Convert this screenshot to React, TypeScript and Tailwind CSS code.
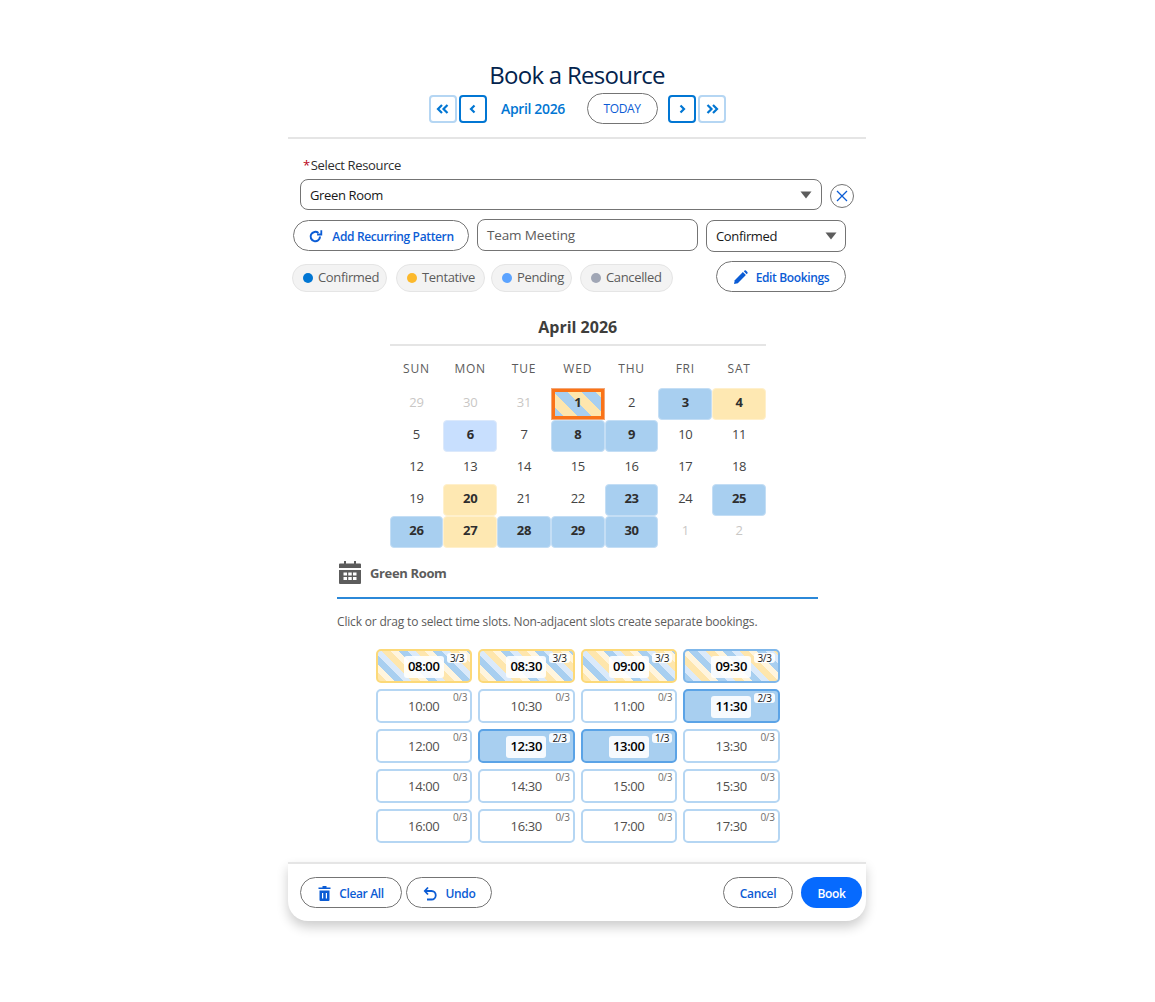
import React from "react";

const F = "[font-family:'Open_Sans','Noto_Sans',sans-serif] tracking-[-0.022em]";
const STRIPE_Y = "bg-[repeating-linear-gradient(45deg,#fee6ad_0,#fee6ad_6px,#fff5de_6px,#fff5de_12px,#a8cff0_12px,#a8cff0_18px,#dbeafa_18px,#dbeafa_24px)]";
const STRIPE_B = "bg-[repeating-linear-gradient(45deg,#a8cff0_0,#a8cff0_6px,#dbeafa_6px,#dbeafa_12px,#fee6ad_12px,#fee6ad_18px,#fff5de_18px,#fff5de_24px)]";

function NavBtn({ strong, children }: { strong?: boolean; children: React.ReactNode }) {
  return (
    <button className={`w-[28px] h-[28px] rounded-[4px] bg-white flex items-center justify-center text-[#0176d3] ${strong ? "border-2 border-[#0176d3]" : "border-2 border-[#b5d6f3]"}`}>
      {children}
    </button>
  );
}

function Chev({ dir, double }: { dir: "l" | "r"; double?: boolean }) {
  const t = dir === "r" ? "" : "scale(-1,1) translate(-14,0)";
  return (
    <svg width="14" height="14" viewBox="0 0 14 14" fill="none" stroke="#0176d3" strokeWidth="2.2">
      <g transform={t}>
        {double ? (
          <>
            <path d="M2.500 3 6.500 7 2.500 11" />
            <path d="M8 3 12 7 8 11" />
          </>
        ) : (
          <path d="M5.500 3.500 9 7 5.500 10.500" />
        )}
      </g>
    </svg>
  );
}

function Caret() {
  return (
    <svg width="12" height="8" viewBox="0 0 12 8"><path d="M0.500 0.500h11L6 7.500z" fill="#5c5c5c" /></svg>
  );
}

function Chip({ color, label, className }: { color: string; label: string; className: string }) {
  return (
    <div className={`h-[28px] shrink-0 rounded-[14px] bg-[#f3f3f3] border border-[#e5e5e5] flex items-center pl-[10px] gap-[5px] text-[13px] text-[#5c5c5c] ${className}`}>
      <span className="w-[10px] h-[10px] rounded-full" style={{ background: color }} />
      <span>{label}</span>
    </div>
  );
}

type Cell = { d: number; k?: "muted" | "blue" | "yellow" | "light" | "today" };
const cells: Cell[] = [
  { d: 29, k: "muted" }, { d: 30, k: "muted" }, { d: 31, k: "muted" }, { d: 1, k: "today" }, { d: 2 }, { d: 3, k: "blue" }, { d: 4, k: "yellow" },
  { d: 5 }, { d: 6, k: "light" }, { d: 7 }, { d: 8, k: "blue" }, { d: 9, k: "blue" }, { d: 10 }, { d: 11 },
  { d: 12 }, { d: 13 }, { d: 14 }, { d: 15 }, { d: 16 }, { d: 17 }, { d: 18 },
  { d: 19 }, { d: 20, k: "yellow" }, { d: 21 }, { d: 22 }, { d: 23, k: "blue" }, { d: 24 }, { d: 25, k: "blue" },
  { d: 26, k: "blue" }, { d: 27, k: "yellow" }, { d: 28, k: "blue" }, { d: 29, k: "blue" }, { d: 30, k: "blue" }, { d: 1, k: "muted" }, { d: 2, k: "muted" },
];

function DayCell({ c }: { c: Cell }) {
  if (c.k === "today") {
    return (
      <div className="h-[32px] pb-[2px] flex items-center justify-center text-[13px] font-bold text-[#2e2e2e] border border-[#f3a878] shadow-[inset_0_0_0_3px_#fa7318] bg-[repeating-linear-gradient(45deg,#a8cff0_0,#a8cff0_10px,#fee6ad_10px,#fee6ad_20px)]">
        {c.d}
      </div>
    );
  }
  const cls =
    c.k === "blue" ? "bg-[#a8cff0] border border-[#c4def5] rounded-[4px] font-bold text-[#2e2e2e]"
    : c.k === "yellow" ? "bg-[#fee8b2] border border-[#fff0cc] rounded-[4px] font-bold text-[#2e2e2e]"
    : c.k === "light" ? "bg-[#c8dffe] border border-[#dce9fb] rounded-[4px] font-bold text-[#2e2e2e]"
    : c.k === "muted" ? "text-[#c9c7c5]"
    : "text-[#444444]";
  return <div className={`h-[32px] pb-[2px] flex items-center justify-center text-[13px] ${cls}`}>{c.d}</div>;
}

type Slot = { t: string; n: number; kind: "free" | "busy" | "stripeY" | "stripeB" };
const slots: Slot[] = [
  { t: "08:00", n: 3, kind: "stripeY" }, { t: "08:30", n: 3, kind: "stripeY" }, { t: "09:00", n: 3, kind: "stripeY" }, { t: "09:30", n: 3, kind: "stripeB" },
  { t: "10:00", n: 0, kind: "free" }, { t: "10:30", n: 0, kind: "free" }, { t: "11:00", n: 0, kind: "free" }, { t: "11:30", n: 2, kind: "busy" },
  { t: "12:00", n: 0, kind: "free" }, { t: "12:30", n: 2, kind: "busy" }, { t: "13:00", n: 1, kind: "busy" }, { t: "13:30", n: 0, kind: "free" },
  { t: "14:00", n: 0, kind: "free" }, { t: "14:30", n: 0, kind: "free" }, { t: "15:00", n: 0, kind: "free" }, { t: "15:30", n: 0, kind: "free" },
  { t: "16:00", n: 0, kind: "free" }, { t: "16:30", n: 0, kind: "free" }, { t: "17:00", n: 0, kind: "free" }, { t: "17:30", n: 0, kind: "free" },
];

function SlotCell({ s }: { s: Slot }) {
  const free = s.kind === "free";
  const bg =
    s.kind === "free" ? "bg-white border-[#b5d6f3]"
    : s.kind === "busy" ? "bg-[#a8cff0] border-[#5ba3e6]"
    : s.kind === "stripeY" ? `border-[#fcd978] ${STRIPE_Y}`
    : `border-[#7fb7ea] ${STRIPE_B}`;
  return (
    <div className={`relative h-[34px] pt-px rounded-[5px] border-2 flex items-center justify-center ${bg}`}>
      {free ? (
        <span className="text-[13px] text-[#514f4d]">{s.t}</span>
      ) : (
        <span className="bg-white/90 rounded-[3px] px-[4px] h-[22px] flex items-center text-[13px] font-semibold text-black">{s.t}</span>
      )}
      {free ? (
        <span className="absolute top-0 right-[3px] text-[10px] leading-[13px] text-[#706e6b]">0/3</span>
      ) : (
        <span className="absolute top-[2px] right-[3px] bg-white/90 rounded-[3px] px-[3px] text-[10px] leading-[10px] text-[#181818]">{s.n}/3</span>
      )}
    </div>
  );
}

function PillBtn({ className = "", children }: { className?: string; children: React.ReactNode }) {
  return (
    <button className={`h-[31px] pt-[2px] rounded-[16px] border border-[#747474] bg-white flex items-center justify-center text-[12px] font-semibold text-[#0b5cd5] ${className}`}>
      {children}
    </button>
  );
}

export default function App() {
  return (
    <div className={`${F} min-h-[1002px] bg-white flex justify-center pt-[58px]`}>
      <div className="w-[578px] ml-[-1px] flex flex-col">
        <div className="flex flex-col items-center border-b-2 border-[#e5e5e5] h-[81px]">
          <h1 className="text-[24px] leading-[33px] text-[#03234d] tracking-[-0.03em]">Book a Resource</h1>
          <div className="flex items-center mt-[2px] h-[31px]">
            <NavBtn><Chev dir="l" double /></NavBtn>
            <div className="w-[2px]" />
            <NavBtn strong><Chev dir="l" /></NavBtn>
            <span className="w-[100px] pr-[7px] text-center text-[14px] font-semibold text-[#0176d3]">April 2026</span>
            <button className="w-[71px] h-[31px] rounded-[16px] border border-[#747474] bg-white text-[12px] font-medium text-[#0b5cd5]">TODAY</button>
            <div className="w-[10px]" />
            <NavBtn strong><Chev dir="r" /></NavBtn>
            <div className="w-[2px]" />
            <NavBtn><Chev dir="r" double /></NavBtn>
          </div>
        </div>

        <div className="pl-[15px] mt-[18px] text-[13px] font-medium text-[#2e2e2e] leading-[16px]">
          <span className="text-[#ba0517] mr-[1px] font-normal">*</span>Select Resource
        </div>
        <div className="flex items-center pl-[12px] mt-[6px]">
          <div className="w-[522px] h-[31px] rounded-[8px] border border-[#747474] flex items-center justify-between pl-[9px] pr-[9px] text-[13px] text-[#181818]">
            <span className="pt-[2px]">Green Room</span>
            <Caret />
          </div>
          <button className="ml-[8px] mt-[2px] w-[24px] h-[24px] rounded-full border border-[#747474] flex items-center justify-center">
            <svg width="12" height="12" viewBox="0 0 12 12" stroke="#0b5cd5" strokeWidth="1.3" fill="none"><path d="M1 1l10 10M11 1 1 11" /></svg>
          </button>
        </div>

        <div className="flex items-start pl-[5px] mt-[9px]">
          <PillBtn className="w-[176px] mt-px gap-[9px]">
            <svg width="15" height="15" viewBox="0 0 15 15" fill="none" stroke="#0b5cd5" strokeWidth="2">
              <path d="M12 7.500a4.700 4.700 0 1 1-1.600-3.500" />
              <path d="M13.300 1.300v4.200H9.100" strokeWidth="1.800" />
            </svg>
            Add Recurring Pattern
          </PillBtn>
          <div className="ml-[8px] w-[221px] h-[32px] rounded-[8px] border border-[#747474] flex items-center px-[9px] pt-px text-[13.500px] tracking-[-0.01em] text-[#5c5c5c]">Team Meeting</div>
          <div className="ml-[8px] mt-px w-[140px] h-[32px] rounded-[8px] border border-[#747474] flex items-center justify-between pl-[9px] pr-[8px] text-[13px] text-[#181818]">
            <span className="pt-px">Confirmed</span>
            <Caret />
          </div>
        </div>

        <div className="flex items-center pl-[4px] mt-[9px] h-[31px]">
          <div className="flex w-[424px] mt-[2px]">
            <Chip color="#0176d3" label="Confirmed" className="w-[95px]" />
            <Chip color="#fcb92c" label="Tentative" className="w-[89px] ml-[9px]" />
            <Chip color="#5ba3ff" label="Pending" className="w-[81px] ml-[6px]" />
            <Chip color="#a0a6b5" label="Cancelled" className="w-[93px] ml-[8px]" />
          </div>
          <PillBtn className="w-[130px] gap-[8px]">
            <svg width="15" height="15" viewBox="0 0 15 15" fill="#0b5cd5">
              <path d="M1 14l.8-3.800L9.900 2.100l3 3-8.100 8.100z" />
              <path d="M10.800 1.200l.8-.6a1 1 0 0 1 1.300 0l1.500 1.500a1 1 0 0 1 0 1.300l-.7.8z" />
            </svg>
            Edit Bookings
          </PillBtn>
        </div>

        <div className="w-[376.500px] mt-[24px] ml-[101.500px]">
          <div className="text-center text-[16px] font-bold tracking-normal text-[#3e3e3c] leading-[22px] pb-[6px] border-b-2 border-[#e5e5e5]">April 2026</div>
          <div className="grid grid-cols-7 mt-[13px] h-[20px] items-center text-center text-[12px] tracking-[0.8px] text-[#5c5c5c]">
            {["SUN", "MON", "TUE", "WED", "THU", "FRI", "SAT"].map((d) => <div key={d}>{d}</div>)}
          </div>
          <div className="grid grid-cols-7 mt-[9px]">
            {cells.map((c, i) => <DayCell key={i} c={c} />)}
          </div>
        </div>

        <div className="ml-[49px] w-[481px] mt-[13px] h-[38px] flex items-start border-b-2 border-[#2b88d8]">
          <svg className="ml-[2px]" width="22" height="23" viewBox="0 0 22 23" fill="#5c5c5c">
            <path d="M5 0h2v3H5zM15 0h2v3h-2z" />
            <path d="M1 2.500h20a1 1 0 0 1 1 1V7H0V3.500a1 1 0 0 1 1-1z" />
            <path fillRule="evenodd" d="M0 9h22v13a1 1 0 0 1-1 1H1a1 1 0 0 1-1-1zM4.500 11.500v3h3.500v-3zM9.250 11.500v3h3.500v-3zM14 11.500v3h3.500v-3zM4.500 16v3h3.500v-3zM9.250 16v3h3.500v-3zM14 16v3h3.500v-3z" />
          </svg>
          <span className="ml-[9px] mt-[1px] text-[13px] font-bold text-[#5c5c5c] leading-[22px]">Green Room</span>
        </div>
        <p className="ml-[49px] mt-[15px] text-[12px] leading-[16px] tracking-[-0.015em] text-[#5c5c5c]">Click or drag to select time slots. Non-adjacent slots create separate bookings.</p>

        <div className="ml-[87.500px] w-[404px] mt-[19px] grid grid-cols-4 gap-x-[6px] gap-y-[6px]">
          {slots.map((s) => <SlotCell key={s.t} s={s} />)}
        </div>

        <div className="mt-[19px] h-[59px] rounded-b-[20px] border-t-2 border-[#e5e5e5] bg-white shadow-[0_6px_12px_rgba(0,0,0,0.2)] flex items-center pl-[12px] pr-[4px]">
          <PillBtn className="w-[102px] gap-[8px]">
            <svg width="13" height="15" viewBox="0 0 13 15" fill="#0b5cd5">
              <path d="M4.500 0h4v1.500h4V3H.500V1.500h4z" />
              <path fillRule="evenodd" d="M1.500 4.500h10V14a1 1 0 0 1-1 1h-8a1 1 0 0 1-1-1zM4 7v5.500h1.200V7zM7.800 7v5.500H9V7z" />
            </svg>
            Clear All
          </PillBtn>
          <PillBtn className="w-[86px] ml-[4px] gap-[8px]">
            <svg width="15" height="15" viewBox="0 0 15 15" fill="none" stroke="#0b5cd5" strokeWidth="1.800">
              <path d="M5 1.500 1.800 5 5 8.500" />
              <path d="M2 5h6.500a4 4 0 0 1 0 8.500H4" />
            </svg>
            Undo
          </PillBtn>
          <div className="flex-1" />
          <PillBtn className="w-[70px]">Cancel</PillBtn>
          <button className="ml-[8px] w-[61px] h-[31px] pt-[2px] rounded-[16px] bg-[#066afe] text-white text-[12px] font-semibold">Book</button>
        </div>
      </div>
    </div>
  );
}
